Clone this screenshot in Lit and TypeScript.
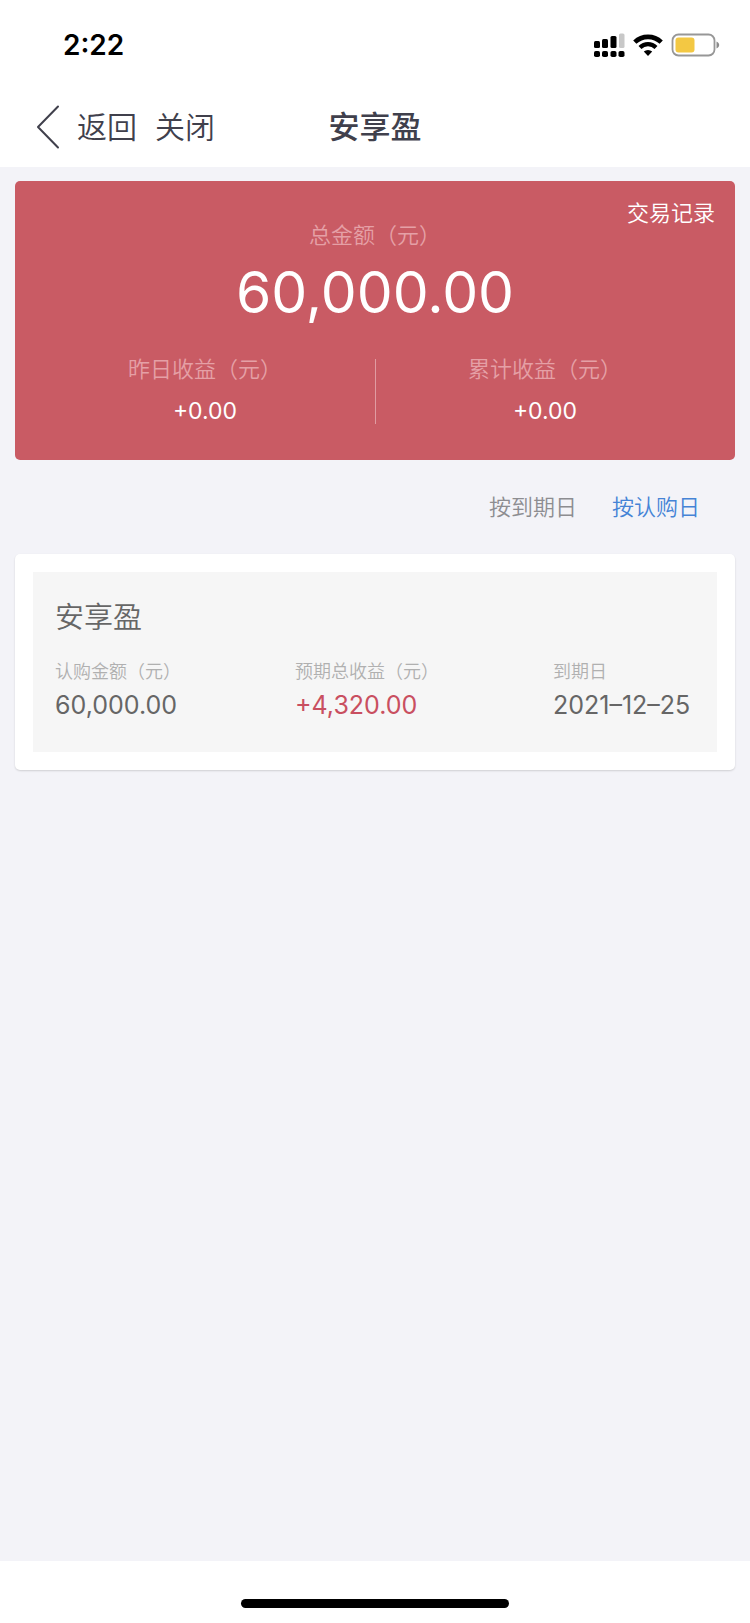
import { LitElement, html, css } from "lit";
import { customElement, state } from "lit/decorators.js";

@customElement("status-bar")
class StatusBar extends LitElement {
  static styles = css`
    :host {
      display: flex;
      align-items: center;
      justify-content: space-between;
      height: 90px;
      padding: 0 30px 0 63px;
      box-sizing: border-box;
    }
    .time {
      font-size: 28px;
      line-height: 36px;
      font-weight: 600;
      color: #000;
    }
    .icons {
      display: flex;
      align-items: center;
      gap: 8px;
    }
    svg {
      display: block;
    }
  `;

  render() {
    return html`
      <span class="time">2:22</span>
      <div class="icons">
        <svg width="31" height="24" viewBox="0 0 31 24" role="img" aria-label="信号">
          <rect x="0" y="8" width="6" height="7" rx="1.5" />
          <rect x="8" y="6" width="6" height="9" rx="1.5" />
          <rect x="16.5" y="3" width="6" height="12" rx="1.5" />
          <rect x="25" y="0.5" width="5.5" height="14.5" rx="1.5" fill="#c8c8c8" />
          <rect x="0" y="18" width="6" height="6" rx="1.8" />
          <rect x="8" y="18" width="6" height="6" rx="1.8" />
          <rect x="16.5" y="18" width="6" height="6" rx="1.8" />
          <rect x="24.5" y="18" width="6" height="6" rx="1.8" />
        </svg>
        <svg width="30" height="22" viewBox="0 0 30 22" role="img" aria-label="无线网络">
          <path d="M1.8 8.2a19 19 0 0 1 26.4 0" fill="none" stroke="#000" stroke-width="4.6" />
          <path d="M7 13.4a11.5 11.5 0 0 1 16 0" fill="none" stroke="#000" stroke-width="4.2" />
          <path d="M10.8 17.6a6.2 6.2 0 0 1 8.4 0L15 22z" />
        </svg>
        <svg width="49" height="24" viewBox="0 0 49 24" role="img" aria-label="电池">
          <rect x="1.5" y="1.5" width="42" height="21" rx="6" fill="none" stroke="#979797" stroke-width="1.8" />
          <rect x="4.5" y="4.5" width="19" height="15" rx="3" fill="#f3c843" />
          <path d="M45.5 8.5c3.6 1.4 3.6 5.6 0 7z" fill="#8b8b8b" />
        </svg>
      </div>
    `;
  }
}

@customElement("nav-bar")
class NavBar extends LitElement {
  static styles = css`
    :host {
      display: grid;
      grid-template-columns: 1fr auto 1fr;
      align-items: center;
      height: 77px;
      padding: 0 36px 4px;
      box-sizing: border-box;
      color: #40404c;
    }
    .actions {
      display: flex;
      align-items: center;
      gap: 18px;
    }
    button {
      display: flex;
      align-items: center;
      gap: 17px;
      padding: 0;
      border: 0;
      background: none;
      font: inherit;
      font-size: 30px;
      line-height: 44px;
      font-weight: 350;
      color: inherit;
      white-space: nowrap;
    }
    .title {
      margin: 0;
      font-size: 31px;
      line-height: 44px;
      font-weight: 500;
    }
    svg {
      display: block;
    }
  `;

  render() {
    return html`
      <div class="actions">
        <button type="button">
          <svg width="24" height="44" viewBox="0 0 24 44" aria-hidden="true">
            <path d="M22 1.5 2 22l20 20.5" fill="none" stroke="currentColor" stroke-width="2" stroke-linecap="round" stroke-linejoin="round" />
          </svg>
          返回
        </button>
        <button type="button">关闭</button>
      </div>
      <h1 class="title">安享盈</h1>
    `;
  }
}

@customElement("summary-card")
class SummaryCard extends LitElement {
  static styles = css`
    :host {
      display: block;
      position: relative;
      padding: 38px 20px 32px;
      border-radius: 5px;
      background: #c95b64;
      color: #fff;
      text-align: center;
    }
    .records {
      position: absolute;
      top: 16px;
      right: 20px;
      font-size: 22px;
      line-height: 32px;
      font-weight: 350;
      color: #fff;
      text-decoration: none;
    }
    .label {
      font-size: 22px;
      line-height: 32px;
      font-weight: 350;
      color: #e5a0a6;
    }
    .total {
      font-size: 57px;
      line-height: 84px;
    }
    .split {
      display: grid;
      grid-template-columns: 1fr 1fr;
      padding-top: 18px;
    }
    .cell {
      display: flex;
      flex-direction: column;
      gap: 10px;
    }
    .cell + .cell {
      background: linear-gradient(#e09ca2, #e09ca2) left 6px / 1px 65px no-repeat;
    }
    .gain {
      font-size: 23px;
      line-height: 33px;
    }
  `;

  render() {
    return html`
      <a class="records" href="#records">交易记录</a>
      <div class="label">总金额（元）</div>
      <div class="total">60,000.00</div>
      <div class="split">
        <div class="cell">
          <span class="label">昨日收益（元）</span>
          <span class="gain">+0.00</span>
        </div>
        <div class="cell">
          <span class="label">累计收益（元）</span>
          <span class="gain">+0.00</span>
        </div>
      </div>
    `;
  }
}

@customElement("holding-card")
class HoldingCard extends LitElement {
  static styles = css`
    :host {
      display: block;
      padding: 18px;
      border-radius: 5px;
      background: #fff;
      box-shadow: 0 1px 2px rgba(0, 0, 0, 0.15);
    }
    .panel {
      padding: 24px 22px 20px;
      background: #f6f6f6;
      color: #666;
    }
    .name {
      margin: 0;
      font-size: 29px;
      line-height: 44px;
      font-weight: 350;
    }
    .figures {
      display: flex;
      justify-content: space-between;
      margin: 0;
      padding: 19px 0 11px;
    }
    .figures > :last-child {
      min-width: 142px;
    }
    dt {
      font-size: 18px;
      line-height: 26px;
      font-weight: 350;
      color: #b0b0b0;
    }
    dd {
      margin: 0;
      padding-top: 4px;
      font-size: 25px;
      line-height: 32px;
    }
    .gain {
      color: #c94f60;
    }
  `;

  render() {
    return html`
      <div class="panel">
        <h2 class="name">安享盈</h2>
        <dl class="figures">
          <div><dt>认购金额（元）</dt><dd>60,000.00</dd></div>
          <div><dt>预期总收益（元）</dt><dd class="gain">+4,320.00</dd></div>
          <div><dt>到期日</dt><dd>2021–12–25</dd></div>
        </dl>
      </div>
    `;
  }
}

@customElement("app-root")
class AppRoot extends LitElement {
  static styles = css`
    :host {
      display: flex;
      flex-direction: column;
      min-height: 100vh;
      background: #fff;
      font-family: Inter, "Noto Sans CJK SC", sans-serif;
    }
    .content {
      flex: 1;
      padding: 14px 15px;
      background: #f3f3f8;
    }
    .sort {
      display: flex;
      justify-content: flex-end;
      gap: 35px;
      padding: 30px 35px;
    }
    .sort button {
      padding: 0;
      border: 0;
      background: none;
      font: inherit;
      font-size: 22px;
      line-height: 34px;
      font-weight: 350;
      color: #8d8d91;
    }
    .sort button[aria-pressed="true"] {
      color: #4583d6;
    }
    .home {
      display: flex;
      justify-content: center;
      align-items: flex-end;
      height: 62px;
      padding-bottom: 15px;
      box-sizing: border-box;
    }
    .indicator {
      width: 268px;
      height: 9px;
      border-radius: 5px;
      background: #000;
    }
  `;

  @state() sortBy = "按认购日";

  render() {
    return html`
      <status-bar></status-bar>
      <nav-bar></nav-bar>
      <main class="content">
        <summary-card></summary-card>
        <div class="sort">
          ${["按到期日", "按认购日"].map(
            (name) => html`<button
              type="button"
              aria-pressed=${this.sortBy === name ? "true" : "false"}
              @click=${() => (this.sortBy = name)}
            >${name}</button>`
          )}
        </div>
        <holding-card></holding-card>
      </main>
      <div class="home"><div class="indicator"></div></div>
    `;
  }
}
